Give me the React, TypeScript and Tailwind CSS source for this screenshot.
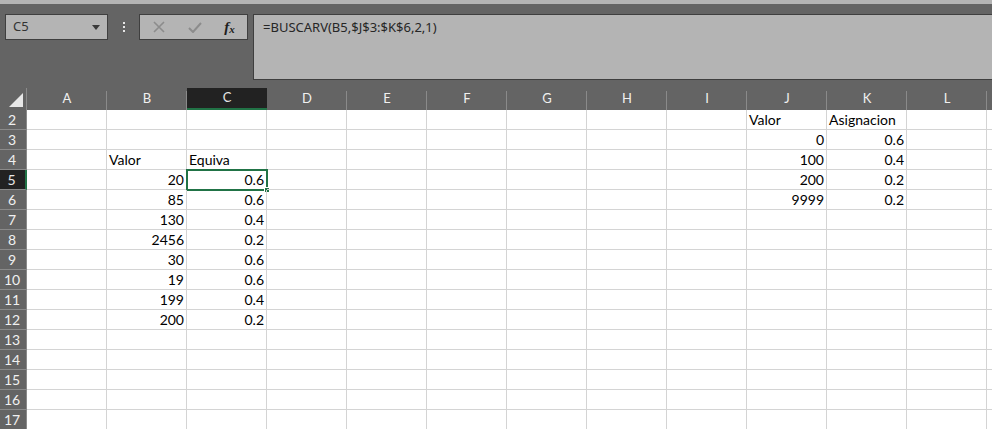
import { FC } from "react";

const COLS = ["A", "B", "C", "D", "E", "F", "G", "H", "I", "J", "K", "L", "M"];
const ROWS = [2, 3, 4, 5, 6, 7, 8, 9, 10, 11, 12, 13, 14, 15, 16, 17];

type Cell = { v: string; left?: boolean };

const cells: Record<string, Cell> = {
  B4: { v: "Valor", left: true },
  C4: { v: "Equiva", left: true },
  J2: { v: "Valor", left: true },
  K2: { v: "Asignacion", left: true },
};

const colB = ["20", "85", "130", "2456", "30", "19", "199", "200"];
const colC = ["0.6", "0.6", "0.4", "0.2", "0.6", "0.6", "0.4", "0.2"];
colB.forEach((v, i) => (cells["B" + (i + 5)] = { v }));
colC.forEach((v, i) => (cells["C" + (i + 5)] = { v }));
const colJ = ["0", "100", "200", "9999"];
const colK = ["0.6", "0.4", "0.2", "0.2"];
colJ.forEach((v, i) => (cells["J" + (i + 3)] = { v }));
colK.forEach((v, i) => (cells["K" + (i + 3)] = { v }));

const FormulaBar: FC = () => (
  <div className="h-[84px] bg-[#646464] flex items-start pt-[10px] pl-[5px] gap-0">
    <div className="w-[103px] shrink-0 h-[26px] bg-[#b4b4b4] border border-[#3f3f3f] flex items-center justify-between pl-[7px] pr-[7px] text-[13px] text-[#333] font-['Noto_Sans',sans-serif]">
      <span>C5</span>
      <svg width="8" height="5" viewBox="0 0 8 5">
        <path d="M0 0 H8 L4 5 Z" fill="#3a3a3a" />
      </svg>
    </div>
    <div className="w-[31px] shrink-0 h-[26px] flex flex-col items-center justify-center gap-[2px]">
      <span className="w-[2px] h-[2px] bg-[#e6e6e6]" />
      <span className="w-[2px] h-[2px] bg-[#e6e6e6]" />
      <span className="w-[2px] h-[2px] bg-[#e6e6e6]" />
    </div>
    <div className="w-[109px] shrink-0 h-[26px] bg-[#b4b4b4] border border-[#3f3f3f] flex items-center">
      <div className="w-[36px] flex justify-center pl-[2px]">
        <svg width="12" height="12" viewBox="0 0 12 12">
          <path d="M1 1 L11 11 M11 1 L1 11" stroke="#8c8c8c" strokeWidth="1.6" />
        </svg>
      </div>
      <div className="w-[38px] flex justify-center">
        <svg width="14" height="11" viewBox="0 0 14 11">
          <path d="M1 6 L5 10 L13 1" stroke="#8c8c8c" strokeWidth="2" fill="none" />
        </svg>
      </div>
      <div className="flex-1 flex justify-center pr-[2px] text-[#1e1e1e] font-['Liberation_Serif',serif] italic font-bold leading-none">
        <span className="text-[15px]">f</span>
        <span className="text-[11px] mt-[4px]">x</span>
      </div>
    </div>
    <div className="ml-[5px] flex-1 h-[66px] bg-[#b4b4b4] border border-[#3f3f3f] border-r-0 pl-[9px] pt-[3px] text-[13px] text-[#262626] font-['Noto_Sans',sans-serif]">
      =BUSCARV(B5,$J$3:$K$6,2,1)
    </div>
  </div>
);

const HeaderRow: FC = () => (
  <div className="flex h-[22px] bg-[#646464]">
    <div className="w-[27px] shrink-0 h-full relative border-r border-[#8a8a8a]">
      <svg className="absolute right-[3px] bottom-[3px]" width="14" height="14" viewBox="0 0 14 14">
        <path d="M14 0 V14 H0 Z" fill="#e8e8e8" />
      </svg>
    </div>
    {COLS.map((c) => (
      <div
        key={c}
        className={
          c === "C"
            ? "w-[80px] shrink-0 h-full bg-[#222222] border-b-2 border-[#217346] flex items-center justify-center text-[#e6e6e6] text-[13px]"
            : "w-[80px] shrink-0 h-full flex items-center justify-center text-[#f0f0f0] text-[13px] relative after:absolute after:right-0 after:top-[3px] after:bottom-0 after:w-px after:bg-[#8a8a8a]"
        }
      >
        {c === "M" ? "" : c}
      </div>
    ))}
  </div>
);

const Grid: FC = () => (
  <div className="flex flex-col">
    {ROWS.map((r) => (
      <div key={r} className="flex h-[20px]">
        <div
          className={
            r === 5
              ? "w-[27px] shrink-0 h-full bg-[#222222] border-r-2 border-[#217346] border-b border-b-[#8a8a8a] flex items-center justify-center pr-[2px] text-[14px] text-[#e6e6e6]"
              : "w-[27px] shrink-0 h-full bg-[#646464] border-r border-b border-[#8a8a8a] flex items-center justify-center pr-[2px] text-[14px] text-[#f0f0f0]"
          }
        >
          {r}
        </div>
        {COLS.map((c) => {
          const cell = cells[c + r];
          const sel = c === "C" && r === 5;
          return (
            <div
              key={c}
              className={`w-[80px] shrink-0 h-full border-r border-b border-[#d4d4d4] flex items-end pb-[1px] px-[2px] text-[14px] leading-[17px] text-black relative ${
                cell && !cell.left ? "justify-end" : "justify-start"
              }`}
            >
              {cell && <span className="whitespace-nowrap">{cell.v}</span>}
              {sel && (
                <div className="absolute left-[-1px] top-[-1px] w-[82px] h-[22px] border-2 border-[#217346]">
                  <div className="absolute right-[-4px] bottom-[-4px] w-[6px] h-[6px] bg-[#217346] border border-white" />
                </div>
              )}
            </div>
          );
        })}
      </div>
    ))}
  </div>
);

export default function App() {
  return (
    <div className="w-[992px] h-[429px] overflow-hidden bg-white font-['Lato',sans-serif]">
      <div className="h-[4px] bg-[#b4b4b4]" />
      <FormulaBar />
      <HeaderRow />
      <Grid />
    </div>
  );
}
